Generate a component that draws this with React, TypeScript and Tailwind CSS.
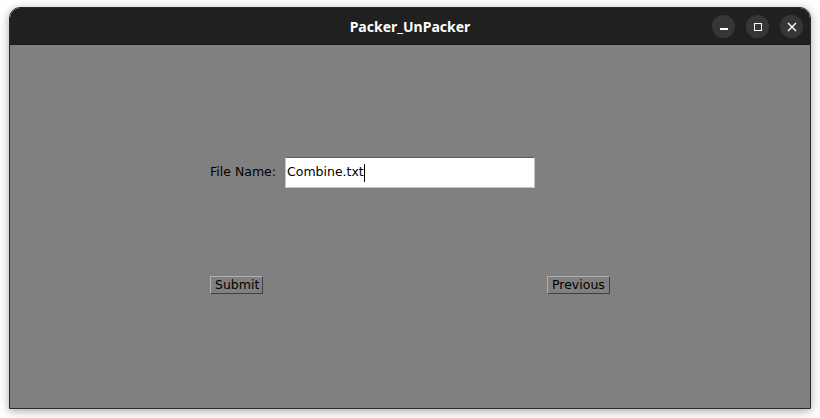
export default function App() {
  return (
    <div className="w-[820px] h-[418px] bg-white pt-[7px] pl-[9px] overflow-hidden">
      <div className="w-[802px] h-[402px] flex flex-col rounded-t-[11px] border border-[#2a2a2a] shadow-[0_2px_10px_rgba(0,0,0,0.35)] overflow-hidden">
        <div className="h-[36px] bg-[#202020] relative flex items-center justify-center shrink-0">
          <span className="text-white font-bold text-[14px] font-['Noto_Sans',sans-serif] mt-[1px]">Packer_UnPacker</span>
          <div className="absolute right-[7px] top-[7px] flex gap-[11px]">
            <div className="w-[23px] h-[23px] rounded-full bg-[#363636] flex items-center justify-center">
              <div className="w-[8px] h-[1.5px] bg-white mt-[5px]" />
            </div>
            <div className="w-[23px] h-[23px] rounded-full bg-[#363636] flex items-center justify-center">
              <div className="w-[8px] h-[8px] border border-white" />
            </div>
            <div className="w-[23px] h-[23px] rounded-full bg-[#363636] flex items-center justify-center">
              <svg width="10" height="10" viewBox="0 0 10 10">
                <path d="M1 1L9 9M9 1L1 9" stroke="white" strokeWidth="1.4" />
              </svg>
            </div>
          </div>
        </div>
        <div className="flex-1 bg-[#808080] border-t border-[#1a1a1a] font-['DejaVu_Sans',sans-serif] text-[12.5px] text-black relative">
          <div className="absolute left-[200px] top-[112px] flex items-center">
            <span className="w-[75px]">File Name:</span>
            <div className="w-[250px] h-[31px] bg-white border border-[#c4c4c4] border-t-[#5a5a5a] flex items-center pl-[1px]">
              <span>Combine.txt</span>
              <span className="w-[1px] h-[18px] bg-black" />
            </div>
          </div>
          <div className="absolute left-[200px] top-[231px] h-[18px] pl-[4px] pr-[3px] border border-[#b0b0b0] border-r-[#404040] border-b-[#404040] flex items-center">
            Submit
          </div>
          <div className="absolute left-[537px] top-[231px] h-[18px] px-[4px] border border-[#b0b0b0] border-r-[#404040] border-b-[#404040] flex items-center">
            Previous
          </div>
        </div>
      </div>
    </div>
  );
}
